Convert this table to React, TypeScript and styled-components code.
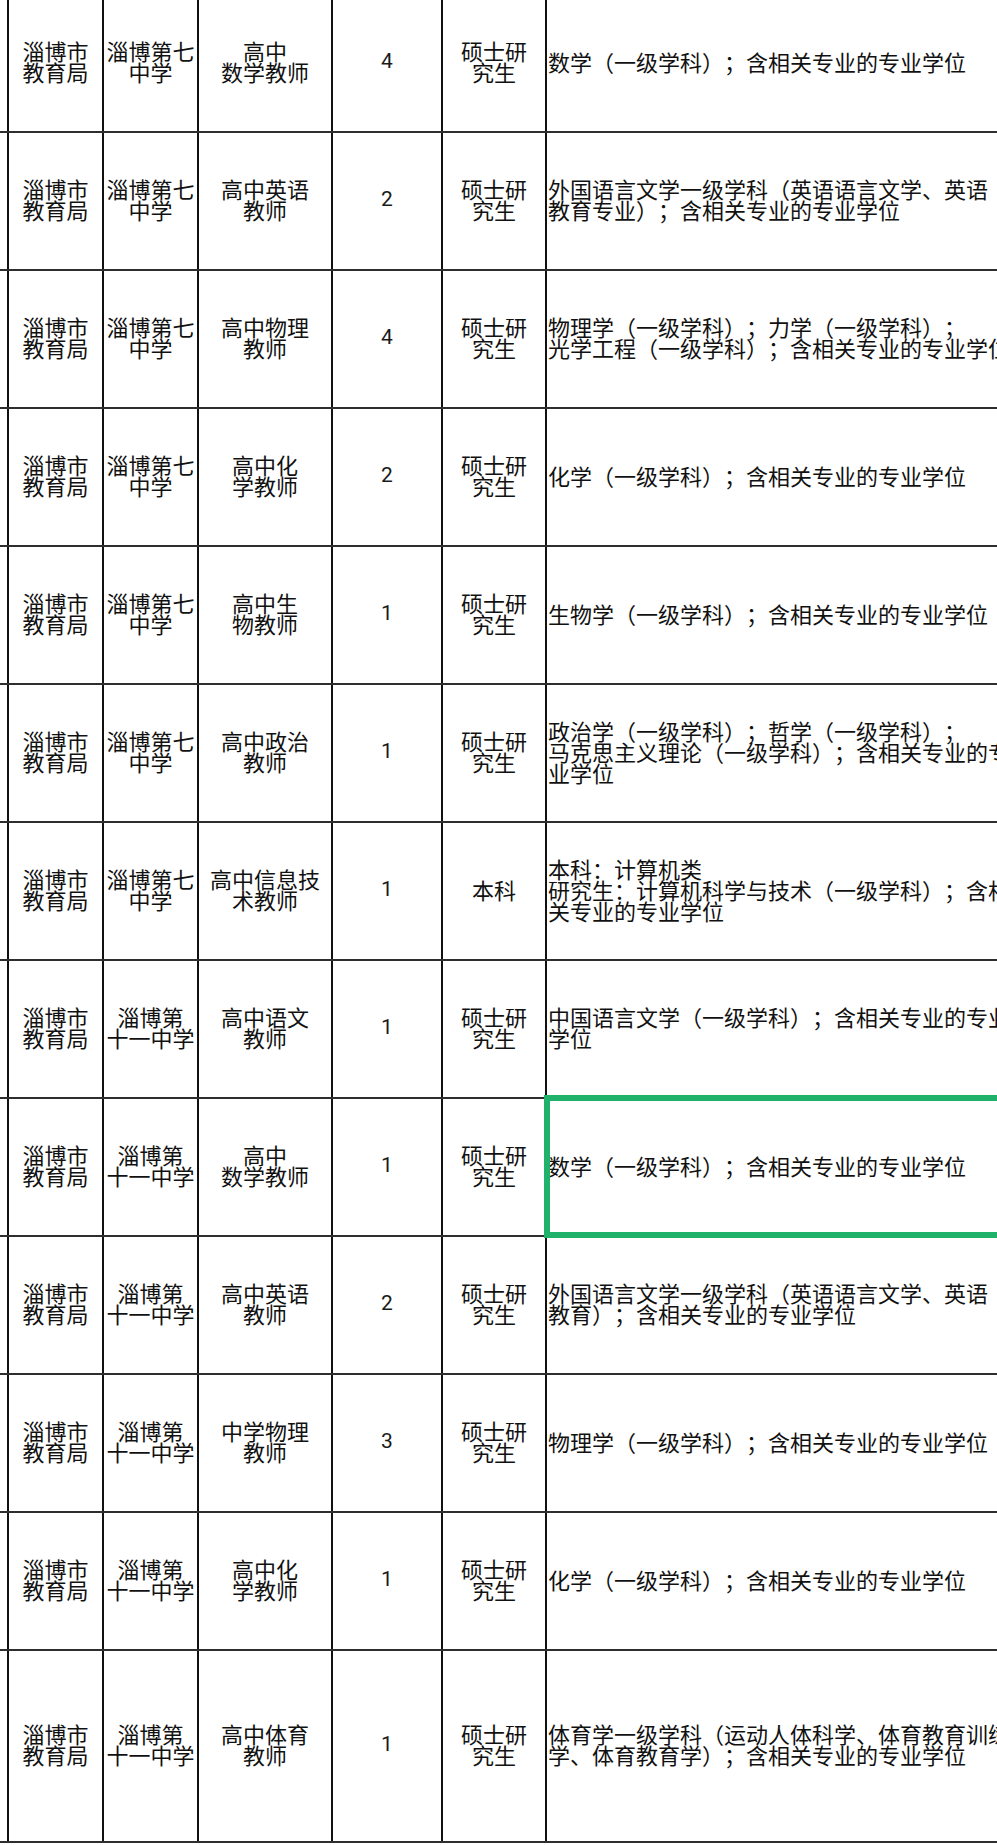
import React from "react";
import styled, { createGlobalStyle } from "styled-components";

const GlobalStyle = createGlobalStyle`
  html, body {
    margin: 0;
    padding: 0;
    background: #ffffff;
    overflow: hidden;
  }
  * { box-sizing: border-box; }
`;

const Sheet = styled.div`
  display: flex;
  flex-direction: column;
  width: 997px;
  margin-top: -5px;
  font-family: "Noto Sans CJK SC", "Noto Sans", sans-serif;
  color: #111111;
  text-spacing-trim: space-all;
`;

const Row = styled.div<{ $h: number }>`
  display: grid;
  grid-template-columns: 9px 95px 95px 134px 110px 104px 1fr;
  height: ${(p) => p.$h}px;
  border-bottom: 2px solid #2e2e2e;
`;

const EdgeCell = styled.div`
  border-right: 2px solid #111111;
`;

const Cell = styled.div`
  display: flex;
  flex-direction: column;
  align-items: center;
  justify-content: center;
  border-right: 2px solid #111111;
  font-size: 22px;
  line-height: 21px;
  text-align: center;
  white-space: nowrap;
  padding-bottom: 4px;
  text-spacing-trim: space-all;
`;

const NumCell = styled.div`
  display: flex;
  align-items: center;
  justify-content: center;
  border-right: 2px solid #111111;
  font-family: Roboto, "Liberation Sans", sans-serif;
  font-size: 21px;
  color: #1a1a1a;
  padding-bottom: 5px;
`;

const DescCell = styled.div`
  position: relative;
  display: flex;
  flex-direction: column;
  align-items: flex-start;
  justify-content: center;
  padding-left: 1px;
  padding-bottom: 4px;
  font-size: 22px;
  line-height: 21px;
  white-space: nowrap;
  text-spacing-trim: space-all;
`;

const Line = styled.span`
  display: block;
  text-spacing-trim: space-all;
`;

const Highlight = styled.div`
  position: absolute;
  top: -4px;
  left: -3px;
  right: -12px;
  bottom: -3px;
  border: 6px solid #20b26b;
  z-index: 1;
  pointer-events: none;
`;

type RowData = {
  dept: string[];
  school: string[];
  post: string[];
  count: string;
  edu: string[];
  major: string[];
  h?: number;
  selected?: boolean;
};

const DEPT = ["淄博市", "教育局"];
const S7 = ["淄博第七", "中学"];
const S11 = ["淄博第", "十一中学"];
const MASTER = ["硕士研", "究生"];

const rows: RowData[] = [
  { dept: DEPT, school: S7, post: ["高中", "数学教师"], count: "4", edu: MASTER, major: ["数学（一级学科）；含相关专业的专业学位"] },
  { dept: DEPT, school: S7, post: ["高中英语", "教师"], count: "2", edu: MASTER, major: ["外国语言文学一级学科（英语语言文学、英语", "教育专业）；含相关专业的专业学位"] },
  { dept: DEPT, school: S7, post: ["高中物理", "教师"], count: "4", edu: MASTER, major: ["物理学（一级学科）；力学（一级学科）；", "光学工程（一级学科）；含相关专业的专业学位"] },
  { dept: DEPT, school: S7, post: ["高中化", "学教师"], count: "2", edu: MASTER, major: ["化学（一级学科）；含相关专业的专业学位"] },
  { dept: DEPT, school: S7, post: ["高中生", "物教师"], count: "1", edu: MASTER, major: ["生物学（一级学科）；含相关专业的专业学位"] },
  { dept: DEPT, school: S7, post: ["高中政治", "教师"], count: "1", edu: MASTER, major: ["政治学（一级学科）；哲学（一级学科）；", "马克思主义理论（一级学科）；含相关专业的专", "业学位"] },
  { dept: DEPT, school: S7, post: ["高中信息技", "术教师"], count: "1", edu: ["本科"], major: ["本科：计算机类", "研究生：计算机科学与技术（一级学科）；含相", "关专业的专业学位"] },
  { dept: DEPT, school: S11, post: ["高中语文", "教师"], count: "1", edu: MASTER, major: ["中国语言文学（一级学科）；含相关专业的专业", "学位"] },
  { dept: DEPT, school: S11, post: ["高中", "数学教师"], count: "1", edu: MASTER, major: ["数学（一级学科）；含相关专业的专业学位"], selected: true },
  { dept: DEPT, school: S11, post: ["高中英语", "教师"], count: "2", edu: MASTER, major: ["外国语言文学一级学科（英语语言文学、英语", "教育）；含相关专业的专业学位"] },
  { dept: DEPT, school: S11, post: ["中学物理", "教师"], count: "3", edu: MASTER, major: ["物理学（一级学科）；含相关专业的专业学位"] },
  { dept: DEPT, school: S11, post: ["高中化", "学教师"], count: "1", edu: MASTER, major: ["化学（一级学科）；含相关专业的专业学位"] },
  { dept: DEPT, school: S11, post: ["高中体育", "教师"], count: "1", edu: MASTER, major: ["体育学一级学科（运动人体科学、体育教育训练", "学、体育教育学）；含相关专业的专业学位"], h: 192 },
];

const Lines: React.FC<{ items: string[] }> = ({ items }) => (
  <>
    {items.map((t, i) => (
      <Line key={i}>{t}</Line>
    ))}
  </>
);

export default function App() {
  return (
    <>
      <GlobalStyle />
      <Sheet>
        {rows.map((r, i) => (
          <Row key={i} $h={r.h ?? 138}>
            <EdgeCell />
            <Cell>
              <Lines items={r.dept} />
            </Cell>
            <Cell>
              <Lines items={r.school} />
            </Cell>
            <Cell>
              <Lines items={r.post} />
            </Cell>
            <NumCell>{r.count}</NumCell>
            <Cell>
              <Lines items={r.edu} />
            </Cell>
            <DescCell>
              <Lines items={r.major} />
              {r.selected && <Highlight />}
            </DescCell>
          </Row>
        ))}
      </Sheet>
    </>
  );
}
